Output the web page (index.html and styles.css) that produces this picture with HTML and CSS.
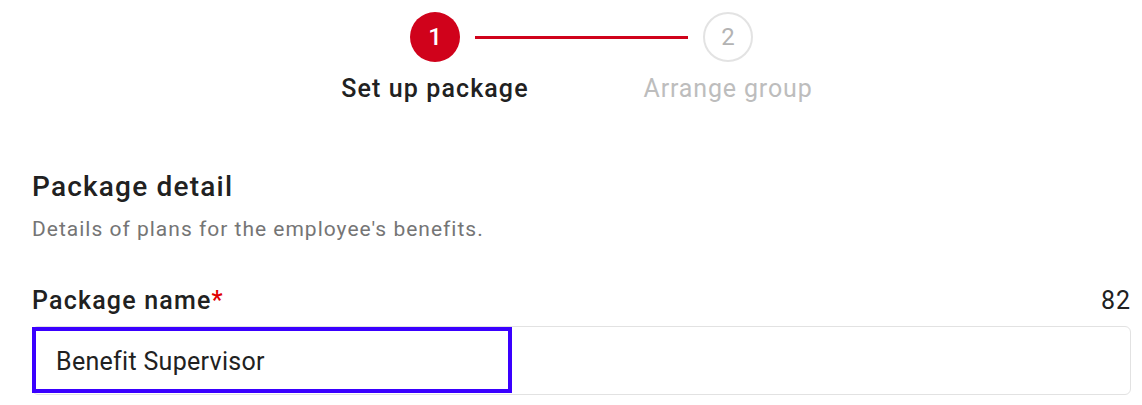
FILE: index.html
```html
<!DOCTYPE html>
<html lang="en">
<head>
<meta charset="utf-8">
<title>Set up package</title>
<link rel="stylesheet" href="styles.css">
</head>
<body>
<main class="page">
  <section class="stepper">
    <div class="step-track">
      <span class="step-dot step-dot--active">1</span>
      <span class="step-line"></span>
      <span class="step-dot step-dot--idle">2</span>
    </div>
    <div class="step-labels">
      <span class="step-label step-label--active">Set up package</span>
      <span class="step-label step-label--idle">Arrange group</span>
    </div>
  </section>

  <section class="detail">
    <h2 class="detail-title">Package detail</h2>
    <p class="detail-sub">Details of plans for the employee's benefits.</p>

    <div class="field-head">
      <span class="field-label">Package name<span class="req">*</span></span>
      <span class="field-count">82</span>
    </div>
    <div class="field-box">
      <span class="field-value">Benefit Supervisor</span>
    </div>
  </section>
</main>
</body>
</html>
```

FILE: styles.css
```css
* { box-sizing: border-box; }
html, body { margin: 0; padding: 0; background: #fff; }
body {
  font-family: Roboto, "Liberation Sans", Arial, sans-serif;
  color: #212121;
  width: 1142px;
  height: 405px;
  overflow: hidden;
}
.page {
  padding: 12px 11px 0 32px;
}
.stepper {
  display: flex;
  flex-direction: column;
  align-items: center;
}
.step-track {
  display: flex;
  align-items: center;
  width: 343px;
}
.step-dot {
  width: 50px;
  height: 50px;
  border-radius: 50%;
  display: flex;
  align-items: center;
  justify-content: center;
  font-size: 24px;
  flex: none;
}
.step-dot--active {
  background: #d0021b;
  color: #fff;
  font-weight: 500;
}
.step-dot--idle {
  border: 2px solid #e3e3e3;
  color: #b3b3b3;
}
.step-line {
  flex: 1;
  height: 3px;
  margin: 0 15px;
  background: #d0021b;
}
.step-labels {
  display: grid;
  grid-template-columns: 293px 293px;
  margin-top: 12px;
}
.step-label {
  text-align: center;
  font-size: 25px;
  line-height: 30px;
}
.step-label--active { font-weight: 500; color: #212121; letter-spacing: 1.1px; }
.step-label--idle { color: #bdbdbd; letter-spacing: 0.85px; }

.detail { margin-top: 66px; }
.detail-title {
  margin: 0;
  font-size: 28px;
  font-weight: 500;
  letter-spacing: 1.2px;
  line-height: 34px;
  color: #212121;
}
.detail-sub {
  margin: 12px 0 0;
  font-size: 21px;
  letter-spacing: 1px;
  line-height: 26px;
  color: #757575;
}
.field-head {
  display: flex;
  justify-content: space-between;
  align-items: baseline;
  margin-top: 44px;
  line-height: 30px;
}
.field-label {
  font-size: 25px;
  font-weight: 500;
  letter-spacing: 1.2px;
}
.req { color: #e00000; }
.field-count {
  font-size: 25px;
  letter-spacing: 1px;
  color: #212121;
}
.field-box {
  margin-top: 10px;
  height: 69px;
  border: 1px solid #e2e2e2;
  border-radius: 6px;
  display: flex;
  align-items: stretch;
}
.field-value {
  width: 480px;
  margin: 0 0 1px -1px;
  border: 4px solid #3a00ff;
  display: flex;
  align-items: center;
  padding-left: 20px;
  padding-top: 2px;
  font-size: 25px;
  letter-spacing: 0.3px;
  color: #212121;
}
```
